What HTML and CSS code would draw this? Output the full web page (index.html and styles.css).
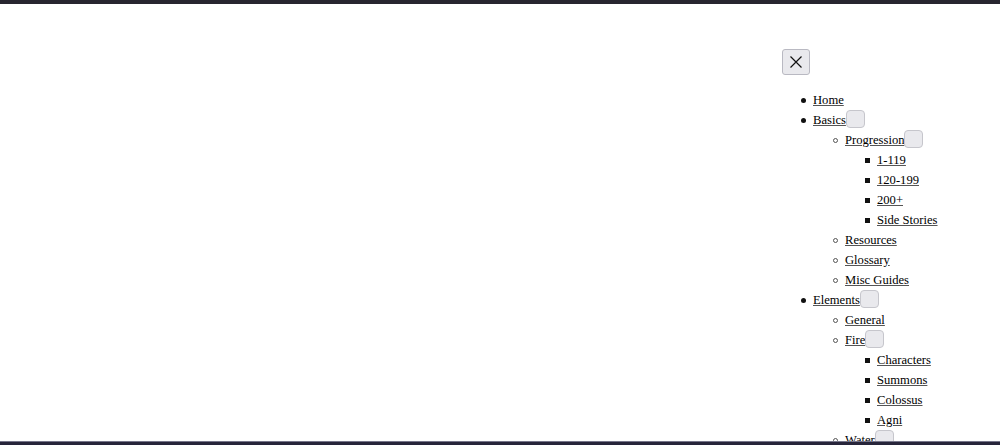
FILE: index.html
```html
<!DOCTYPE html>
<html lang="en">
<head>
<meta charset="utf-8">
<title>Menu</title>
<link rel="stylesheet" href="styles.css">
</head>
<body>
<div class="topbar"></div>
<div class="page">
  <div class="spacer"></div>
  <nav class="menu">
    <button class="close" aria-label="Close">
      <svg width="12" height="12" viewBox="0 0 12 12"><path d="M0.5 0.5L11.5 11.5M11.5 0.5L0.5 11.5" stroke="#111" stroke-width="1.2" fill="none"/></svg>
    </button>
    <ul class="lvl1">
      <li><a href="#">Home</a></li>
      <li><a href="#">Basics</a><button class="tog"></button>
        <ul class="lvl2">
          <li><a href="#">Progression</a><button class="tog"></button>
            <ul class="lvl3">
              <li><a href="#">1-119</a></li>
              <li><a href="#">120-199</a></li>
              <li><a href="#">200+</a></li>
              <li><a href="#">Side Stories</a></li>
            </ul>
          </li>
          <li><a href="#">Resources</a></li>
          <li><a href="#">Glossary</a></li>
          <li><a href="#">Misc Guides</a></li>
        </ul>
      </li>
      <li><a href="#">Elements</a><button class="tog"></button>
        <ul class="lvl2">
          <li><a href="#">General</a></li>
          <li><a href="#">Fire</a><button class="tog"></button>
            <ul class="lvl3">
              <li><a href="#">Characters</a></li>
              <li><a href="#">Summons</a></li>
              <li><a href="#">Colossus</a></li>
              <li><a href="#">Agni</a></li>
            </ul>
          </li>
          <li><a href="#">Water</a><button class="tog"></button></li>
        </ul>
      </li>
    </ul>
  </nav>
</div>
<div class="bottombar"></div>
</body>
</html>
```
FILE: styles.css
```css
html, body {
  margin: 0;
  padding: 0;
  background: #fff;
  height: 100%;
  overflow: hidden;
}
body {
  font-family: "Liberation Serif", "Times New Roman", serif;
  font-size: 12.6px;
  color: #000;
}
.topbar {
  height: 4px;
  background: #27252f;
}
.page {
  display: flex;
}
.spacer {
  flex: 1;
}
.menu {
  width: 218px;
  padding-top: 45px;
}
.close {
  display: flex;
  align-items: center;
  justify-content: center;
  width: 28px;
  height: 26px;
  padding: 0;
  background: #e9e9ed;
  border: 1px solid #b9b9c2;
  border-radius: 3px;
}
.menu ul {
  margin: 0;
  padding-left: 31px;
  line-height: 20px;
  list-style: none;
}
.menu ul ul {
  padding-left: 32px;
}
.menu .lvl1 {
  margin-top: 15px;
}
.menu li {
  position: relative;
}
.menu li::before {
  content: "";
  position: absolute;
  left: -12px;
  top: 8px;
  width: 5px;
  height: 5px;
  box-sizing: border-box;
}
.lvl1 > li::before {
  border-radius: 50%;
  background: #111;
}
.lvl2 > li::before {
  border-radius: 50%;
  border: 1px solid #555;
}
.lvl3 > li::before {
  background: #111;
}
.menu a {
  color: #000;
  text-decoration: underline;
  text-decoration-color: #555;
}
.tog {
  display: inline-block;
  vertical-align: top;
  margin: 0;
  width: 19px;
  height: 18px;
  padding: 0;
  background: #e9e9ed;
  border: 1px solid #c6c6cc;
  border-radius: 4px;
}
.bottombar {
  position: fixed;
  left: 0;
  right: 0;
  bottom: 0;
  height: 3px;
  background: #27253a;
  border-top: 1px solid #77768a;
}
```
